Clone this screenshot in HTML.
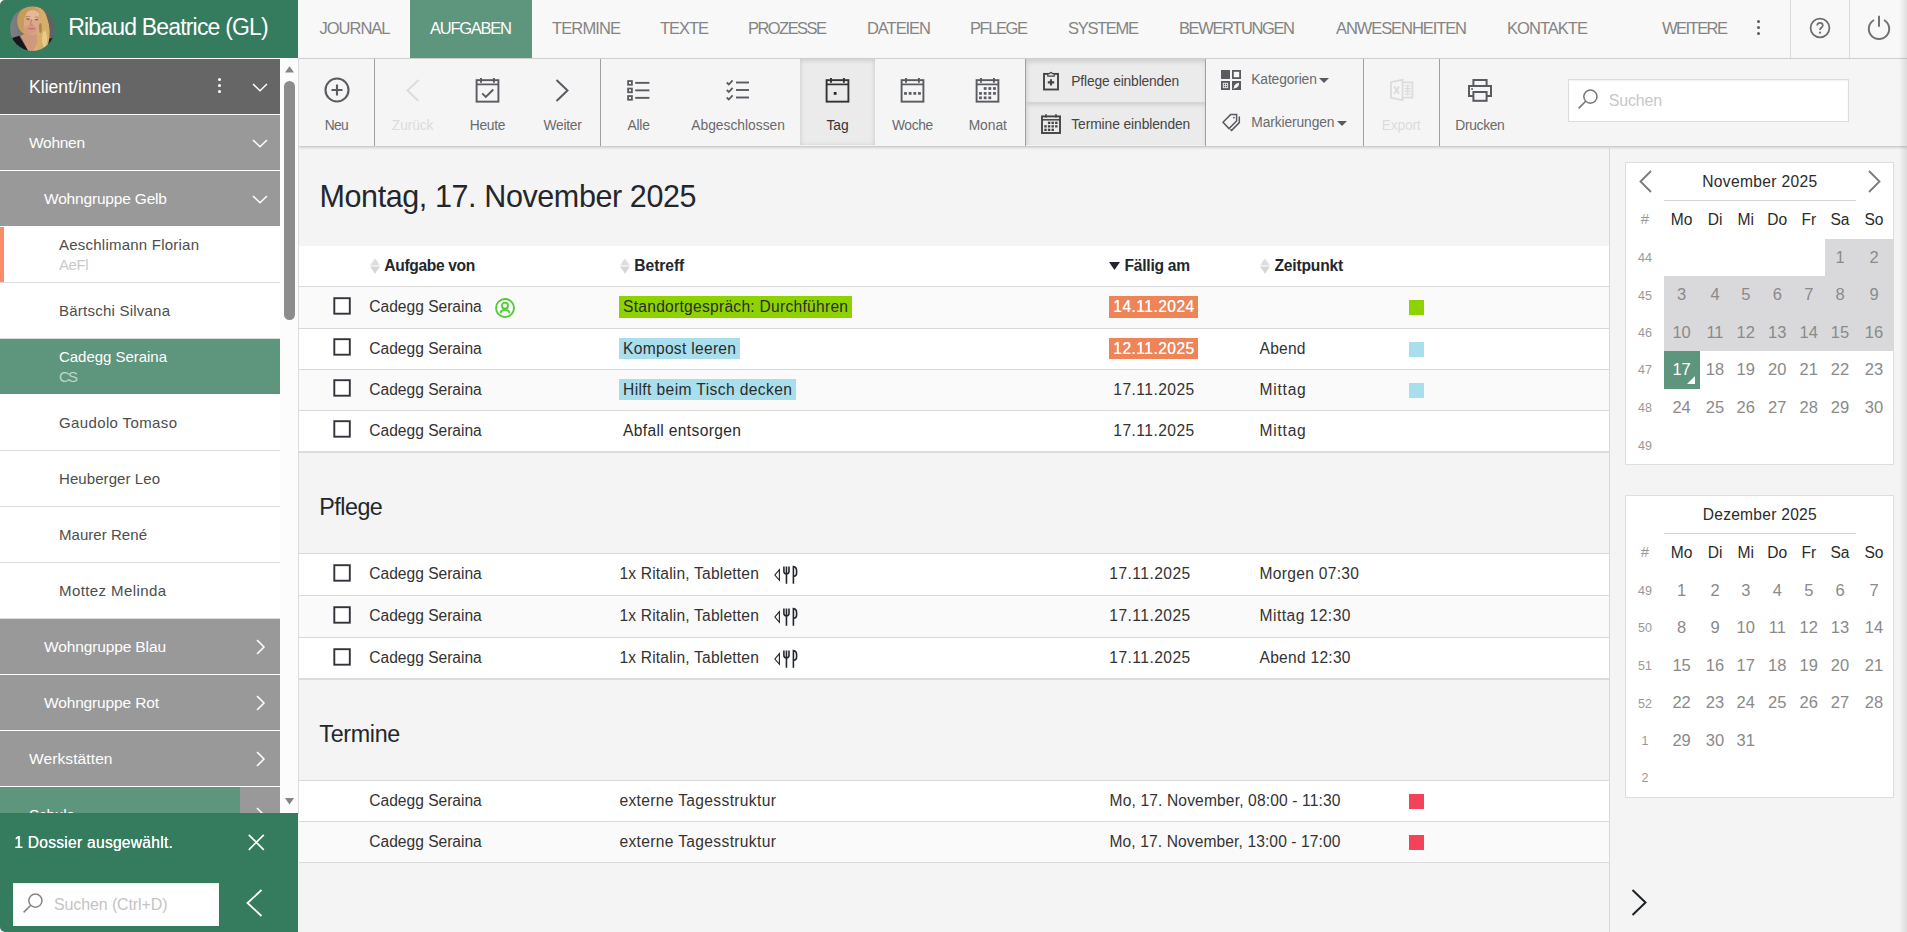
<!DOCTYPE html>
<html><head><meta charset="utf-8"><title>Aufgaben</title>
<style>
html,body{margin:0;padding:0;}
body{width:1907px;height:932px;overflow:hidden;position:relative;background:#f4f4f4;font-family:"Liberation Sans", sans-serif;}
body>div,body>span,body>svg{position:absolute;}
body>span{white-space:pre;line-height:1;}
body>svg{overflow:visible;}
</style></head><body>
<div style="left:0px;top:0px;width:1907px;height:932px;background:#f4f4f4;"></div>
<div style="left:298px;top:0px;width:1609px;height:58px;background:#f8f8f8;"></div>
<div style="left:298px;top:58px;width:1609px;height:1px;background:#d9d9d9;"></div>
<div style="left:298px;top:59px;width:1609px;height:87px;background:#f5f5f5;box-shadow:0 1px 3px rgba(0,0,0,.25);"></div>
<div style="left:0px;top:0px;width:298px;height:58px;background:#357b5e;"></div>
<div style="left:0px;top:58px;width:298px;height:1px;background:#fff;"></div>
<svg style="left:10px;top:6px" width="45" height="45" viewBox="0 0 45 45">
<defs><clipPath id="av"><circle cx="22.4" cy="22.6" r="22.3"/></clipPath>
<linearGradient id="avbg" x1="0" x2="1" y1="0" y2="0"><stop offset="0" stop-color="#7f8084"/><stop offset=".5" stop-color="#6c6d71"/><stop offset="1" stop-color="#5e5f63"/></linearGradient>
<filter id="avb" x="-10%" y="-10%" width="120%" height="120%"><feGaussianBlur stdDeviation=".55"/></filter>
<linearGradient id="avh" x1="0" x2="1" y1="0" y2="1"><stop offset="0" stop-color="#b98f4a"/><stop offset=".5" stop-color="#d3ac64"/><stop offset="1" stop-color="#e1c07c"/></linearGradient>
</defs>
<g clip-path="url(#av)">
<rect width="45" height="45" fill="url(#avbg)"/>
<g filter="url(#avb)">
<path d="M7.4 15 C6.5 6 14 0 24 0.3 C32 0.8 35.5 6 36.8 12 C38.8 18 40 24 39.3 30 C39.6 37 36 43 30 46 L21 46 L24 30 L14 27.5 C9 25 7.4 20 7.4 15 Z" fill="url(#avh)"/>
<path d="M0.5 32.5 L9.2 29.8 L19 46 L2 46 Z" fill="#17171a"/>
<path d="M36.8 33 L43 32 L43 40 L36 42 Z" fill="#1a1a1c"/>
<path d="M10.5 30 L16 27 L27 27 L27.5 36 L23.5 46 L18.8 46 Z" fill="#cf9a7c"/>
<ellipse cx="22.2" cy="16.4" rx="8.7" ry="12.6" fill="#dca787"/>
<ellipse cx="22.6" cy="9" rx="6.6" ry="4.6" fill="#e6b898"/>
<ellipse cx="20.6" cy="23.5" rx="6" ry="4.4" fill="#d69a7e"/>
<path d="M23 1.2 C15.5 3 13 11 14 19 C13.4 22.6 12.4 24.6 13.6 26.6 C8.4 24.6 6.4 17 8 10.4 C10 4 16 0.4 23 1.2 Z" fill="#c69d56"/>
<path d="M23 1 C29 2 31.4 7.4 31 13 C31.8 18 31 23.4 29.6 27.6 C28.4 33 27.4 39 26 46 L33 46 C38 41 39.6 35 39.2 29 C40 22 38.4 16 36.6 11 C35 4.6 30 0.6 23 1 Z" fill="#d5ae68"/>
<ellipse cx="34.6" cy="33" rx="2.6" ry="8.6" fill="#ecd194" opacity=".8"/>
<ellipse cx="30.4" cy="22" rx="1.4" ry="5" fill="#9c743c" opacity=".7"/>
<rect x="16.4" y="12.4" width="3.4" height="1.3" rx=".6" fill="#5d6468"/>
<rect x="25" y="12.9" width="3.2" height="1.3" rx=".6" fill="#5d6468"/>
<path d="M15.6 10.8 Q18 9.8 20.4 10.8 M24.6 11.2 Q26.8 10.4 28.8 11.6" stroke="#a27a52" stroke-width=".7" fill="none"/>
<path d="M21.6 13.5 C21 16 20.4 17.8 20.6 18.8 C21.2 19.6 22.6 19.6 23.4 19" stroke="#b47c60" stroke-width="1" fill="none"/>
<path d="M18.4 22.3 Q21.6 23.6 25 22.2" stroke="#bd6a68" stroke-width="1.2" fill="none"/>
</g>
</g></svg>
<span style="left:68.20px;top:16px;font-size:23px;color:#fff;letter-spacing:-0.818px;">Ribaud Beatrice (GL)</span>
<div style="left:410px;top:0px;width:122px;height:58px;background:#5e957d;"></div>
<span style="left:319.50px;top:20px;font-size:16.5px;color:#848484;letter-spacing:-1.003px;">JOURNAL</span>
<span style="left:430.00px;top:20px;font-size:16.5px;color:#fff;letter-spacing:-1.254px;">AUFGABEN</span>
<span style="left:552.00px;top:20px;font-size:16.5px;color:#848484;letter-spacing:-0.875px;">TERMINE</span>
<span style="left:660.00px;top:20px;font-size:16.5px;color:#848484;letter-spacing:-1.047px;">TEXTE</span>
<span style="left:748.00px;top:20px;font-size:16.5px;color:#848484;letter-spacing:-1.551px;">PROZESSE</span>
<span style="left:867.00px;top:20px;font-size:16.5px;color:#848484;letter-spacing:-1.049px;">DATEIEN</span>
<span style="left:970.00px;top:20px;font-size:16.5px;color:#848484;letter-spacing:-1.422px;">PFLEGE</span>
<span style="left:1068.00px;top:20px;font-size:16.5px;color:#848484;letter-spacing:-1.310px;">SYSTEME</span>
<span style="left:1179.00px;top:20px;font-size:16.5px;color:#848484;letter-spacing:-1.387px;">BEWERTUNGEN</span>
<span style="left:1336.00px;top:20px;font-size:16.5px;color:#848484;letter-spacing:-1.078px;">ANWESENHEITEN</span>
<span style="left:1507.00px;top:20px;font-size:16.5px;color:#848484;letter-spacing:-0.960px;">KONTAKTE</span>
<span style="left:1662.00px;top:20px;font-size:16.5px;color:#848484;letter-spacing:-1.529px;">WEITERE</span>
<div style="left:1756.8px;top:20.299999999999997px;width:3px;height:3px;background:#5c5c5c;border-radius:50%;"></div>
<div style="left:1756.8px;top:26.2px;width:3px;height:3px;background:#5c5c5c;border-radius:50%;"></div>
<div style="left:1756.8px;top:32.1px;width:3px;height:3px;background:#5c5c5c;border-radius:50%;"></div>
<div style="left:1790px;top:0px;width:1px;height:58px;background:#dcdcdc;"></div>
<div style="left:1849px;top:0px;width:1px;height:58px;background:#dcdcdc;"></div>
<svg style="left:1809px;top:16.5px;" width="22" height="22" viewBox="0 0 22 22"><circle cx="11" cy="11" r="9.4" fill="none" stroke="#6e6e6e" stroke-width="1.8"/><path d="M8.2 8.6 C8.2 6.8 9.5 5.9 11 5.9 C12.6 5.9 13.8 6.9 13.8 8.4 C13.8 10.4 11 10.6 11 12.9" fill="none" stroke="#6e6e6e" stroke-width="1.7"/><circle cx="11" cy="15.7" r="1.1" fill="#6e6e6e"/></svg>
<svg style="left:1867.2px;top:15.2px;" width="24" height="24" viewBox="0 0 24 24"><path d="M7 5 A10.2 10.2 0 1 0 17 5" fill="none" stroke="#737373" stroke-width="2"/><path d="M12 0.8 V11.8" stroke="#737373" stroke-width="2"/></svg>
<div style="left:1899px;top:0px;width:8px;height:932px;background:linear-gradient(to right, rgba(0,0,0,0), rgba(0,0,0,.10));"></div>
<div style="left:374px;top:59px;width:1px;height:87px;background:#a0a0a0;"></div>
<div style="left:600px;top:59px;width:1px;height:87px;background:#a0a0a0;"></div>
<div style="left:1025px;top:59px;width:1px;height:87px;background:#a0a0a0;"></div>
<div style="left:1205px;top:59px;width:1px;height:87px;background:#a0a0a0;"></div>
<div style="left:1363px;top:59px;width:1px;height:87px;background:#a0a0a0;"></div>
<div style="left:1439px;top:59px;width:1px;height:87px;background:#a0a0a0;"></div>
<div style="left:800px;top:59px;width:75px;height:86px;background:#ebebeb;box-shadow:inset 0 1px 5px rgba(0,0,0,.16);"></div>
<div style="left:1026px;top:59px;width:179px;height:43px;background:#ebebeb;box-shadow:inset 1px 3px 4px rgba(0,0,0,.12);"></div>
<div style="left:1026px;top:102px;width:179px;height:43px;background:#ebebeb;box-shadow:inset 1px 3px 4px rgba(0,0,0,.12);"></div>
<svg style="left:323.5px;top:77.3px;" width="26" height="26" viewBox="0 0 26 26"><circle cx="13" cy="13" r="11.5" fill="none" stroke="#595b60" stroke-width="2.1"/><path d="M13 7.5 V18.5 M7.5 13 H18.5" stroke="#595b60" stroke-width="2.1"/></svg>
<span style="left:324.70px;top:119px;font-size:13.8px;color:#686a6f;letter-spacing:-0.656px;">Neu</span>
<svg style="left:406px;top:79px;" width="14" height="23" viewBox="0 0 14 23"><path d="M12.5 1 L1.5 11.5 L12.5 22" fill="none" stroke="#dcdcdc" stroke-width="2"/></svg>
<span style="left:391.85px;top:119px;font-size:13.8px;color:#dcdcdc;letter-spacing:-0.134px;">Zurück</span>
<svg style="left:475px;top:78px;" width="25" height="25" viewBox="0 0 25 25"><rect x="1.6" y="2.15" width="21.8" height="21.5" fill="none" stroke="#595b60" stroke-width="1.9"/><path d="M1.6 6.4 H23.4" stroke="#595b60" stroke-width="1.7"/><path d="M6 0 V4.8 M18.9 0 V4.8" stroke="#595b60" stroke-width="1.9"/><path d="M7.2 15.4 L10.8 19 L18.3 11.5" fill="none" stroke="#595b60" stroke-width="1.9"/></svg>
<span style="left:469.75px;top:119px;font-size:13.8px;color:#686a6f;letter-spacing:-0.282px;">Heute</span>
<svg style="left:554.8px;top:79px;" width="14" height="23" viewBox="0 0 14 23"><path d="M1.5 1 L12.5 11.5 L1.5 22" fill="none" stroke="#595b60" stroke-width="2"/></svg>
<span style="left:543.55px;top:119px;font-size:13.8px;color:#686a6f;letter-spacing:-0.265px;">Weiter</span>
<svg style="left:627px;top:79px;" width="24" height="22" viewBox="0 0 24 22"><rect x="1.1" y="2.05" width="3.8" height="3.7" fill="none" stroke="#595b60" stroke-width="1.8"/><path d="M8.2 3.85 H22.4" stroke="#595b60" stroke-width="1.9"/><rect x="1.1" y="9.55" width="3.8" height="3.7" fill="none" stroke="#595b60" stroke-width="1.8"/><path d="M8.2 11.35 H22.4" stroke="#595b60" stroke-width="1.9"/><rect x="1.1" y="17.05" width="3.8" height="3.7" fill="none" stroke="#595b60" stroke-width="1.8"/><path d="M8.2 18.85 H22.4" stroke="#595b60" stroke-width="1.9"/></svg>
<span style="left:627.45px;top:119px;font-size:13.8px;color:#686a6f;letter-spacing:-0.172px;">Alle</span>
<svg style="left:726px;top:79px;" width="24" height="22" viewBox="0 0 24 22"><path d="M0.8 3.5 L2.8 5.5 L6.6 1.2999999999999998" fill="none" stroke="#595b60" stroke-width="1.8"/><path d="M10 3.5 H23" stroke="#595b60" stroke-width="1.9"/><path d="M0.8 11 L2.8 13 L6.6 8.8" fill="none" stroke="#595b60" stroke-width="1.8"/><path d="M10 11 H23" stroke="#595b60" stroke-width="1.9"/><path d="M0.8 18.5 L2.8 20.5 L6.6 16.3" fill="none" stroke="#595b60" stroke-width="1.8"/><path d="M10 18.5 H23" stroke="#595b60" stroke-width="1.9"/></svg>
<span style="left:691.30px;top:119px;font-size:13.8px;color:#686a6f;">Abgeschlossen</span>
<svg style="left:825px;top:78px;" width="25" height="25" viewBox="0 0 25 25"><rect x="1.6" y="2.15" width="21.8" height="21.5" fill="none" stroke="#333" stroke-width="1.9"/><path d="M1.6 6.4 H23.4" stroke="#333" stroke-width="1.7"/><path d="M6 0 V4.8 M18.9 0 V4.8" stroke="#333" stroke-width="1.9"/><rect x="8.75" y="14.05" width="2.8" height="2.7" fill="#222"/></svg>
<span style="left:826.60px;top:119px;font-size:13.8px;color:#333;letter-spacing:-0.125px;">Tag</span>
<svg style="left:900px;top:78px;" width="25" height="25" viewBox="0 0 25 25"><rect x="1.6" y="2.15" width="21.8" height="21.5" fill="none" stroke="#595b60" stroke-width="1.9"/><path d="M1.6 6.4 H23.4" stroke="#595b60" stroke-width="1.7"/><path d="M6 0 V4.8 M18.9 0 V4.8" stroke="#595b60" stroke-width="1.9"/><rect x="4.10" y="14.05" width="2.8" height="2.7" fill="#595b60"/><rect x="8.75" y="14.05" width="2.8" height="2.7" fill="#595b60"/><rect x="13.40" y="14.05" width="2.8" height="2.7" fill="#595b60"/><rect x="18.05" y="14.05" width="2.8" height="2.7" fill="#595b60"/></svg>
<span style="left:891.95px;top:119px;font-size:13.8px;color:#686a6f;letter-spacing:-0.351px;">Woche</span>
<svg style="left:975px;top:78px;" width="25" height="25" viewBox="0 0 25 25"><rect x="1.6" y="2.15" width="21.8" height="21.5" fill="none" stroke="#595b60" stroke-width="1.9"/><path d="M1.6 6.4 H23.4" stroke="#595b60" stroke-width="1.7"/><path d="M6 0 V4.8 M18.9 0 V4.8" stroke="#595b60" stroke-width="1.9"/><rect x="8.75" y="9.15" width="2.8" height="2.7" fill="#595b60"/><rect x="13.40" y="9.15" width="2.8" height="2.7" fill="#595b60"/><rect x="18.05" y="9.15" width="2.8" height="2.7" fill="#595b60"/><rect x="4.10" y="14.05" width="2.8" height="2.7" fill="#595b60"/><rect x="8.75" y="14.05" width="2.8" height="2.7" fill="#595b60"/><rect x="13.40" y="14.05" width="2.8" height="2.7" fill="#595b60"/><rect x="18.05" y="14.05" width="2.8" height="2.7" fill="#595b60"/><rect x="4.10" y="18.45" width="2.8" height="2.7" fill="#595b60"/><rect x="8.75" y="18.45" width="2.8" height="2.7" fill="#595b60"/><rect x="13.40" y="18.45" width="2.8" height="2.7" fill="#595b60"/></svg>
<span style="left:968.65px;top:119px;font-size:13.8px;color:#686a6f;letter-spacing:-0.015px;">Monat</span>
<svg style="left:1043px;top:71.2px;" width="16" height="20" viewBox="0 0 16 20"><rect x="1" y="2.9" width="14" height="15.6" fill="none" stroke="#444" stroke-width="1.9"/><path d="M4.8 5.2 V2.6 H6.6 Q8 0 9.4 2.6 H11.2 V5.2 Z" fill="#ebebeb" stroke="#444" stroke-width="1.2"/><path d="M8 8.2 V14.6 M4.8 11.4 H11.2" stroke="#444" stroke-width="2.1"/></svg>
<span style="left:1071.30px;top:75px;font-size:13.8px;color:#444;letter-spacing:-0.155px;">Pflege einblenden</span>
<svg style="left:1041px;top:114px;" width="20" height="20" viewBox="0 0 20 20"><rect x="1" y="2.4" width="18" height="16.6" fill="none" stroke="#444" stroke-width="1.9"/><path d="M1 5.8 H19" stroke="#444" stroke-width="1.5"/><path d="M5 0.2 V3.4 M15 0.2 V3.4" stroke="#444" stroke-width="1.7"/><rect x="6.9" y="7.7" width="2.4" height="2.3" fill="#444"/><rect x="10.5" y="7.7" width="2.4" height="2.3" fill="#444"/><rect x="14.100000000000001" y="7.7" width="2.4" height="2.3" fill="#444"/><rect x="3.3" y="11.2" width="2.4" height="2.3" fill="#444"/><rect x="6.9" y="11.2" width="2.4" height="2.3" fill="#444"/><rect x="10.5" y="11.2" width="2.4" height="2.3" fill="#444"/><rect x="14.100000000000001" y="11.2" width="2.4" height="2.3" fill="#444"/><rect x="3.3" y="14.7" width="2.4" height="2.3" fill="#444"/><rect x="6.9" y="14.7" width="2.4" height="2.3" fill="#444"/><rect x="10.5" y="14.7" width="2.4" height="2.3" fill="#444"/></svg>
<span style="left:1071.30px;top:118px;font-size:13.8px;color:#444;letter-spacing:-0.084px;">Termine einblenden</span>
<svg style="left:1221px;top:70px;" width="20" height="20" viewBox="0 0 20 20"><rect x="0" y="0" width="9" height="9" fill="#595b60"/><rect x="11.9" y="0.9" width="7.2" height="7.2" fill="none" stroke="#595b60" stroke-width="1.8"/><rect x="0" y="11" width="9" height="9" fill="#595b60"/><rect x="2.3" y="13.3" width="4.4" height="4.4" fill="none" stroke="#f0f0f0" stroke-width=".9"/><path d="M2.3 15.5 H6.7 M4.5 13.3 V17.7" stroke="#f0f0f0" stroke-width=".8"/><rect x="11" y="11" width="9" height="9" fill="#595b60"/><path d="M12.8 18.2 C12.8 15 14.8 12.9 18.1 12.9 C18.1 16.2 16 18.2 12.8 18.2 Z" fill="#f4f4f4"/><path d="M12.4 18.6 L14.2 16.8" stroke="#f4f4f4" stroke-width=".8"/></svg>
<span style="left:1251.30px;top:73px;font-size:13.8px;color:#686a6f;letter-spacing:-0.137px;">Kategorien</span>
<svg style="left:1318.6px;top:77.8px;" width="10" height="5" viewBox="0 0 10 5"><path d="M0 0 H10 L5 5 Z" fill="#595b60"/></svg>
<svg style="left:1222px;top:113px;" width="20" height="19" viewBox="0 0 20 19"><path d="M1 9.2 L8.6 1.6 H14.6 V8 L7 15.6 Z" fill="none" stroke="#595b60" stroke-width="1.5"/><circle cx="11.9" cy="4.6" r=".9" fill="#595b60"/><path d="M17.3 3.6 V9.6 L9.6 17.4 L8.4 16.4" fill="none" stroke="#595b60" stroke-width="1.5"/></svg>
<span style="left:1251.30px;top:116px;font-size:13.8px;color:#686a6f;letter-spacing:-0.105px;">Markierungen</span>
<svg style="left:1337px;top:121px;" width="10" height="5" viewBox="0 0 10 5"><path d="M0 0 H10 L5 5 Z" fill="#595b60"/></svg>
<svg style="left:1390px;top:79px;" width="24" height="22" viewBox="0 0 24 22"><path d="M1 3.2 L12.5 0.8 V21.2 L1 18.8 Z" fill="none" stroke="#dcdcdc" stroke-width="1.8"/><path d="M12.5 3.4 H22.4 V18.6 H12.5" fill="none" stroke="#dcdcdc" stroke-width="1.8"/><path d="M4.2 7.4 L9 14.8 M9 7.4 L4.2 14.8" stroke="#dcdcdc" stroke-width="1.9"/><path d="M14.5 6.8 H20.6 M14.5 9.6 H20.6 M14.5 12.4 H20.6 M14.5 15.2 H20.6 M17.6 5.4 V16.6" stroke="#dcdcdc" stroke-width="1.3"/></svg>
<span style="left:1381.70px;top:119px;font-size:13.8px;color:#dcdcdc;letter-spacing:-0.175px;">Export</span>
<svg style="left:1468.2px;top:79px;" width="24" height="23" viewBox="0 0 24 23"><rect x="5.4" y="1" width="13.2" height="6" fill="none" stroke="#595b60" stroke-width="2"/><path d="M5.4 17 H1 V7 H23 V17 H18.6" fill="none" stroke="#595b60" stroke-width="2"/><rect x="5.4" y="13" width="13.2" height="8.8" fill="none" stroke="#595b60" stroke-width="2"/><rect x="3.2" y="9.2" width="1.8" height="1.6" fill="#595b60"/></svg>
<span style="left:1455.25px;top:119px;font-size:13.8px;color:#686a6f;letter-spacing:-0.312px;">Drucken</span>
<div style="left:1568px;top:79px;width:280.5px;height:42.6px;background:#fff;border:1px solid #ddd;box-sizing:border-box;box-shadow:inset 0 1px 2px rgba(0,0,0,.06);"></div>
<svg style="left:1576.5px;top:88.3px;" width="22.0" height="22.0" viewBox="0 0 22 22"><circle cx="13.4" cy="8.6" r="6.6" fill="none" stroke="#777" stroke-width="1.5"/><path d="M8.7 13.3 L1.6 20.4" stroke="#777" stroke-width="1.6"/></svg>
<span style="left:1608.70px;top:93px;font-size:16px;color:#c8c8c8;letter-spacing:-0.153px;">Suchen</span>
<div style="left:0px;top:59px;width:298px;height:873px;background:#fff;"></div>
<div style="left:0px;top:59px;width:280px;height:55px;background:#666;"></div>
<span style="left:29.00px;top:79px;font-size:17.5px;color:#fff;letter-spacing:0.048px;">Klient/innen</span>
<div style="left:218.3px;top:78.2px;width:3px;height:3px;background:#fff;border-radius:50%;"></div>
<div style="left:218.3px;top:84.2px;width:3px;height:3px;background:#fff;border-radius:50%;"></div>
<div style="left:218.3px;top:90.2px;width:3px;height:3px;background:#fff;border-radius:50%;"></div>
<svg style="left:251.5px;top:82.5px;" width="16" height="9" viewBox="0 0 16 9"><path d="M1 1 L8 7.7 L15 1" fill="none" stroke="#fff" stroke-width="1.5"/></svg>
<div style="left:0px;top:115px;width:280px;height:55px;background:#999;"></div>
<span style="left:29.00px;top:135px;font-size:15.5px;color:#fff;letter-spacing:-0.291px;">Wohnen</span>
<svg style="left:251.5px;top:138.5px;" width="16" height="9" viewBox="0 0 16 9"><path d="M1 1 L8 7.7 L15 1" fill="none" stroke="#fff" stroke-width="1.5"/></svg>
<div style="left:0px;top:171px;width:280px;height:55px;background:#999;"></div>
<span style="left:44.00px;top:191px;font-size:15.5px;color:#fff;letter-spacing:-0.181px;">Wohngruppe Gelb</span>
<svg style="left:251.5px;top:194.5px;" width="16" height="9" viewBox="0 0 16 9"><path d="M1 1 L8 7.7 L15 1" fill="none" stroke="#fff" stroke-width="1.5"/></svg>
<div style="left:0px;top:282px;width:280px;height:1px;background:#dcdcdc;"></div>
<span style="left:59.00px;top:237px;font-size:15px;color:#4d4d4d;letter-spacing:0.227px;">Aeschlimann Florian</span>
<span style="left:59.00px;top:257px;font-size:15px;color:#cacaca;letter-spacing:-0.448px;">AeFl</span>
<div style="left:0px;top:338px;width:280px;height:1px;background:#dcdcdc;"></div>
<span style="left:59.00px;top:303px;font-size:15px;color:#4d4d4d;letter-spacing:0.229px;">Bärtschi Silvana</span>
<div style="left:0px;top:339px;width:280px;height:55px;background:#5e957d;"></div>
<span style="left:59.00px;top:349px;font-size:15px;color:#fff;letter-spacing:-0.032px;">Cadegg Seraina</span>
<span style="left:59.00px;top:369px;font-size:15px;color:#bfd5ca;letter-spacing:-1.844px;">CS</span>
<div style="left:0px;top:450px;width:280px;height:1px;background:#dcdcdc;"></div>
<span style="left:59.00px;top:415px;font-size:15px;color:#4d4d4d;letter-spacing:0.374px;">Gaudolo Tomaso</span>
<div style="left:0px;top:506px;width:280px;height:1px;background:#dcdcdc;"></div>
<span style="left:59.00px;top:471px;font-size:15px;color:#4d4d4d;letter-spacing:0.077px;">Heuberger Leo</span>
<div style="left:0px;top:562px;width:280px;height:1px;background:#dcdcdc;"></div>
<span style="left:59.00px;top:527px;font-size:15px;color:#4d4d4d;letter-spacing:0.045px;">Maurer René</span>
<div style="left:0px;top:618px;width:280px;height:1px;background:#dcdcdc;"></div>
<span style="left:59.00px;top:583px;font-size:15px;color:#4d4d4d;letter-spacing:0.406px;">Mottez Melinda</span>
<div style="left:0px;top:227px;width:4px;height:55px;background:#fb8c69;"></div>
<div style="left:0px;top:619px;width:280px;height:55px;background:#999;"></div>
<span style="left:44.00px;top:639px;font-size:15.5px;color:#fff;letter-spacing:-0.129px;">Wohngruppe Blau</span>
<svg style="left:256.0px;top:638.5px;" width="9" height="16" viewBox="0 0 9 16"><path d="M1 1 L8 8 L1 15" fill="none" stroke="#fff" stroke-width="1.5"/></svg>
<div style="left:0px;top:675px;width:280px;height:55px;background:#999;"></div>
<span style="left:44.00px;top:695px;font-size:15.5px;color:#fff;letter-spacing:-0.147px;">Wohngruppe Rot</span>
<svg style="left:256.0px;top:694.5px;" width="9" height="16" viewBox="0 0 9 16"><path d="M1 1 L8 8 L1 15" fill="none" stroke="#fff" stroke-width="1.5"/></svg>
<div style="left:0px;top:731px;width:280px;height:55px;background:#999;"></div>
<span style="left:29.00px;top:751px;font-size:15.5px;color:#fff;letter-spacing:0.108px;">Werkstätten</span>
<svg style="left:256.0px;top:750.5px;" width="9" height="16" viewBox="0 0 9 16"><path d="M1 1 L8 8 L1 15" fill="none" stroke="#fff" stroke-width="1.5"/></svg>
<div style="left:0px;top:787px;width:240px;height:40px;background:#5e957d;"></div>
<div style="left:240px;top:787px;width:40px;height:40px;background:#999;"></div>
<span style="left:29.00px;top:807px;font-size:15.5px;color:#fff;letter-spacing:-0.281px;">Schule</span>
<svg style="left:256.0px;top:806.5px;" width="9" height="16" viewBox="0 0 9 16"><path d="M1 1 L8 8 L1 15" fill="none" stroke="#fff" stroke-width="1.5"/></svg>
<div style="left:280px;top:59px;width:18px;height:754px;background:#fcfcfc;"></div>
<svg style="left:284.5px;top:65.8px;" width="9" height="7" viewBox="0 0 9 7"><path d="M0 6.6 L4.5 0.3 L9 6.6 Z" fill="#858585"/></svg>
<svg style="left:284.8px;top:798.2px;" width="9" height="7" viewBox="0 0 9 7"><path d="M0 0 L4.5 6.5 L9 0 Z" fill="#858585"/></svg>
<div style="left:284px;top:81px;width:11px;height:239px;background:#8c8c8c;border-radius:6px;"></div>
<div style="left:298px;top:59px;width:1px;height:755px;background:#dcdcde;"></div>
<div style="left:0px;top:813px;width:298px;height:119px;background:#357b5e;"></div>
<span style="left:14.30px;top:835px;font-size:15.6px;color:#fff;letter-spacing:0.254px;text-shadow:0 0 .6px #fff;">1 Dossier ausgewählt.</span>
<svg style="left:247.7px;top:833.8px;" width="16.6" height="16.6" viewBox="0 0 16.6 16.6"><path d="M0.8 0.8 L15.8 15.8 M15.8 0.8 L0.8 15.8" stroke="#fff" stroke-width="1.7"/></svg>
<div style="left:13px;top:883px;width:206px;height:42.6px;background:#fff;box-shadow:inset 0 1px 2px rgba(0,0,0,.1);"></div>
<svg style="left:21.5px;top:892.3px;" width="22.0" height="22.0" viewBox="0 0 22 22"><circle cx="13.4" cy="8.6" r="6.6" fill="none" stroke="#858585" stroke-width="1.5"/><path d="M8.7 13.3 L1.6 20.4" stroke="#858585" stroke-width="1.6"/></svg>
<span style="left:54.00px;top:897px;font-size:16px;color:#c4c4c4;letter-spacing:-0.118px;">Suchen (Ctrl+D)</span>
<svg style="left:246px;top:889px;" width="17" height="28" viewBox="0 0 17 28"><path d="M15.5 1 L1.5 14 L15.5 27" fill="none" stroke="#fff" stroke-width="1.8"/></svg>
<div style="left:1609px;top:146px;width:1px;height:786px;background:#d8d8d8;"></div>
<span style="left:319.50px;top:181px;font-size:30.5px;color:#23272d;letter-spacing:-0.399px;">Montag, 17. November 2025</span>
<div style="left:299px;top:246px;width:1310px;height:40px;background:#fff;"></div>
<div style="left:299px;top:286px;width:1310px;height:1.4px;background:#d9d9d9;"></div>
<svg style="left:369.5px;top:257.7px;" width="10" height="16" viewBox="0 0 10 16"><path d="M0 7.6 L5 0.2 L10 7.6 Z" fill="#dedede"/><path d="M0 8.4 L5 15.8 L10 8.4 Z" fill="#d6d6d6"/></svg>
<span style="left:384.30px;top:258px;font-size:15.6px;color:#23272d;font-weight:700;letter-spacing:-0.344px;">Aufgabe von</span>
<svg style="left:619.5px;top:257.7px;" width="10" height="16" viewBox="0 0 10 16"><path d="M0 7.6 L5 0.2 L10 7.6 Z" fill="#dedede"/><path d="M0 8.4 L5 15.8 L10 8.4 Z" fill="#d6d6d6"/></svg>
<span style="left:634.30px;top:258px;font-size:15.6px;color:#23272d;font-weight:700;letter-spacing:-0.044px;">Betreff</span>
<svg style="left:1109px;top:262.3px;" width="11" height="8" viewBox="0 0 11 8"><path d="M0 0 H11 L5.5 8 Z" fill="#23272d"/></svg>
<span style="left:1124.60px;top:258px;font-size:15.6px;color:#23272d;font-weight:700;letter-spacing:-0.262px;">Fällig am</span>
<svg style="left:1259.5px;top:257.7px;" width="10" height="16" viewBox="0 0 10 16"><path d="M0 7.6 L5 0.2 L10 7.6 Z" fill="#dedede"/><path d="M0 8.4 L5 15.8 L10 8.4 Z" fill="#d6d6d6"/></svg>
<span style="left:1274.50px;top:258px;font-size:15.6px;color:#23272d;font-weight:700;letter-spacing:-0.184px;">Zeitpunkt</span>
<div style="left:299px;top:287.4px;width:1310px;height:40.6px;background:#fafafa;"></div>
<div style="left:299px;top:328px;width:1310px;height:1px;background:#d9d9d9;"></div>
<svg style="left:333px;top:297px;" width="18" height="18" viewBox="0 0 18 18"><rect x="1.3" y="1.2" width="15.5" height="15.5" fill="#fff" stroke="#33333c" stroke-width="1.9"/></svg>
<span style="left:369.30px;top:299px;font-size:15.6px;color:#333;letter-spacing:-0.017px;">Cadegg Seraina</span>
<div style="left:619px;top:296px;width:233px;height:22px;background:#8ed300;"></div>
<span style="left:623.00px;top:299px;font-size:15.6px;color:#2b2b2b;letter-spacing:0.265px;">Standortgespräch: Durchführen</span>
<div style="left:1109px;top:296px;width:89px;height:22px;background:#ee8457;"></div>
<span style="left:1113.30px;top:299px;font-size:15.6px;color:#fff;letter-spacing:0.457px;text-shadow:0 0 .5px #fff;">14.11.2024</span>
<div style="left:1409px;top:300px;width:15.4px;height:15px;background:#8ed300;"></div>
<div style="left:299px;top:329px;width:1310px;height:40px;background:#fff;"></div>
<div style="left:299px;top:369px;width:1310px;height:1px;background:#d9d9d9;"></div>
<svg style="left:333px;top:338px;" width="18" height="18" viewBox="0 0 18 18"><rect x="1.3" y="1.2" width="15.5" height="15.5" fill="#fff" stroke="#33333c" stroke-width="1.9"/></svg>
<span style="left:369.30px;top:341px;font-size:15.6px;color:#333;letter-spacing:-0.017px;">Cadegg Seraina</span>
<div style="left:619px;top:338px;width:121px;height:21px;background:#a9dfec;"></div>
<span style="left:623.00px;top:341px;font-size:15.6px;color:#2b2b2b;letter-spacing:0.291px;">Kompost leeren</span>
<div style="left:1109px;top:338px;width:89px;height:21px;background:#ee8457;"></div>
<span style="left:1113.30px;top:341px;font-size:15.6px;color:#fff;letter-spacing:0.457px;text-shadow:0 0 .5px #fff;">12.11.2025</span>
<span style="left:1259.50px;top:341px;font-size:15.6px;color:#333;letter-spacing:0.227px;">Abend</span>
<div style="left:1409px;top:342px;width:15.4px;height:15px;background:#a9dfec;"></div>
<div style="left:299px;top:370px;width:1310px;height:40px;background:#fafafa;"></div>
<div style="left:299px;top:410px;width:1310px;height:1px;background:#d9d9d9;"></div>
<svg style="left:333px;top:379px;" width="18" height="18" viewBox="0 0 18 18"><rect x="1.3" y="1.2" width="15.5" height="15.5" fill="#fff" stroke="#33333c" stroke-width="1.9"/></svg>
<span style="left:369.30px;top:382px;font-size:15.6px;color:#333;letter-spacing:-0.017px;">Cadegg Seraina</span>
<div style="left:619px;top:379px;width:177px;height:21px;background:#a9dfec;"></div>
<span style="left:623.00px;top:382px;font-size:15.6px;color:#2b2b2b;letter-spacing:0.393px;">Hilft beim Tisch decken</span>
<span style="left:1113.30px;top:382px;font-size:15.6px;color:#333;letter-spacing:0.457px;">17.11.2025</span>
<span style="left:1259.50px;top:382px;font-size:15.6px;color:#333;letter-spacing:0.766px;">Mittag</span>
<div style="left:1409px;top:383px;width:15.4px;height:15px;background:#a9dfec;"></div>
<div style="left:299px;top:411px;width:1310px;height:40px;background:#fff;"></div>
<div style="left:299px;top:451px;width:1310px;height:1px;background:#d9d9d9;"></div>
<svg style="left:333px;top:420px;" width="18" height="18" viewBox="0 0 18 18"><rect x="1.3" y="1.2" width="15.5" height="15.5" fill="#fff" stroke="#33333c" stroke-width="1.9"/></svg>
<span style="left:369.30px;top:423px;font-size:15.6px;color:#333;letter-spacing:-0.017px;">Cadegg Seraina</span>
<span style="left:623.00px;top:423px;font-size:15.6px;color:#2b2b2b;letter-spacing:0.353px;">Abfall entsorgen</span>
<span style="left:1113.30px;top:423px;font-size:15.6px;color:#333;letter-spacing:0.457px;">17.11.2025</span>
<span style="left:1259.50px;top:423px;font-size:15.6px;color:#333;letter-spacing:0.766px;">Mittag</span>
<div style="left:299px;top:451px;width:1310px;height:2px;background:#dcdcdc;"></div>
<svg style="left:495px;top:298px;" width="20" height="20" viewBox="0 0 20 20"><circle cx="10" cy="10" r="9" fill="none" stroke="#50cb32" stroke-width="1.8"/><circle cx="10" cy="7.7" r="3" fill="none" stroke="#50cb32" stroke-width="1.8"/><path d="M5.4 15.4 C5.6 12.6 7.6 11.9 10 11.9 C12.4 11.9 14.4 12.6 14.6 15.4" fill="none" stroke="#50cb32" stroke-width="1.8"/></svg>
<span style="left:319.30px;top:496px;font-size:23.3px;color:#23272d;letter-spacing:-0.512px;">Pflege</span>
<div style="left:299px;top:553px;width:1310px;height:1px;background:#d9d9d9;"></div>
<div style="left:299px;top:554px;width:1310px;height:41px;background:#fff;"></div>
<div style="left:299px;top:595px;width:1310px;height:1px;background:#d9d9d9;"></div>
<svg style="left:333px;top:564px;" width="18" height="18" viewBox="0 0 18 18"><rect x="1.3" y="1.2" width="15.5" height="15.5" fill="#fff" stroke="#33333c" stroke-width="1.9"/></svg>
<span style="left:369.30px;top:566px;font-size:15.6px;color:#333;letter-spacing:-0.017px;">Cadegg Seraina</span>
<span style="left:619.40px;top:566px;font-size:15.6px;color:#333;letter-spacing:0.184px;">1x Ritalin, Tabletten</span>
<svg style="left:774px;top:566px;" width="24" height="19" viewBox="0 0 24 19"><path d="M5.4 3.7 L0.9 9 L5.4 14.3 Z" fill="none" stroke="#23272d" stroke-width="1.15"/><path d="M9.9 0.4 V5.4 Q9.9 7.7 12.45 7.7 Q15 7.7 15 5.4 V0.4 M12.45 0.4 V17.7" fill="none" stroke="#23272d" stroke-width="1.6"/><path d="M19.4 17.7 V0.6 C21.8 0.8 22.6 3 22.6 5 V7.2 C22.6 9.4 21.4 10.2 19.4 10.5" fill="none" stroke="#23272d" stroke-width="1.6"/></svg>
<span style="left:1109.30px;top:566px;font-size:15.6px;color:#333;letter-spacing:0.457px;">17.11.2025</span>
<span style="left:1259.50px;top:566px;font-size:15.6px;color:#333;letter-spacing:0.297px;">Morgen 07:30</span>
<div style="left:299px;top:596px;width:1310px;height:41px;background:#fafafa;"></div>
<div style="left:299px;top:637px;width:1310px;height:1px;background:#d9d9d9;"></div>
<svg style="left:333px;top:605.5px;" width="18" height="18" viewBox="0 0 18 18"><rect x="1.3" y="1.2" width="15.5" height="15.5" fill="#fff" stroke="#33333c" stroke-width="1.9"/></svg>
<span style="left:369.30px;top:608px;font-size:15.6px;color:#333;letter-spacing:-0.017px;">Cadegg Seraina</span>
<span style="left:619.40px;top:608px;font-size:15.6px;color:#333;letter-spacing:0.184px;">1x Ritalin, Tabletten</span>
<svg style="left:774px;top:608px;" width="24" height="19" viewBox="0 0 24 19"><path d="M5.4 3.7 L0.9 9 L5.4 14.3 Z" fill="none" stroke="#23272d" stroke-width="1.15"/><path d="M9.9 0.4 V5.4 Q9.9 7.7 12.45 7.7 Q15 7.7 15 5.4 V0.4 M12.45 0.4 V17.7" fill="none" stroke="#23272d" stroke-width="1.6"/><path d="M19.4 17.7 V0.6 C21.8 0.8 22.6 3 22.6 5 V7.2 C22.6 9.4 21.4 10.2 19.4 10.5" fill="none" stroke="#23272d" stroke-width="1.6"/></svg>
<span style="left:1109.30px;top:608px;font-size:15.6px;color:#333;letter-spacing:0.457px;">17.11.2025</span>
<span style="left:1259.50px;top:608px;font-size:15.6px;color:#333;letter-spacing:0.470px;">Mittag 12:30</span>
<div style="left:299px;top:638px;width:1310px;height:40px;background:#fff;"></div>
<div style="left:299px;top:678px;width:1310px;height:1px;background:#d9d9d9;"></div>
<svg style="left:333px;top:647.5px;" width="18" height="18" viewBox="0 0 18 18"><rect x="1.3" y="1.2" width="15.5" height="15.5" fill="#fff" stroke="#33333c" stroke-width="1.9"/></svg>
<span style="left:369.30px;top:650px;font-size:15.6px;color:#333;letter-spacing:-0.017px;">Cadegg Seraina</span>
<span style="left:619.40px;top:650px;font-size:15.6px;color:#333;letter-spacing:0.184px;">1x Ritalin, Tabletten</span>
<svg style="left:774px;top:650px;" width="24" height="19" viewBox="0 0 24 19"><path d="M5.4 3.7 L0.9 9 L5.4 14.3 Z" fill="none" stroke="#23272d" stroke-width="1.15"/><path d="M9.9 0.4 V5.4 Q9.9 7.7 12.45 7.7 Q15 7.7 15 5.4 V0.4 M12.45 0.4 V17.7" fill="none" stroke="#23272d" stroke-width="1.6"/><path d="M19.4 17.7 V0.6 C21.8 0.8 22.6 3 22.6 5 V7.2 C22.6 9.4 21.4 10.2 19.4 10.5" fill="none" stroke="#23272d" stroke-width="1.6"/></svg>
<span style="left:1109.30px;top:650px;font-size:15.6px;color:#333;letter-spacing:0.457px;">17.11.2025</span>
<span style="left:1259.50px;top:650px;font-size:15.6px;color:#333;letter-spacing:0.255px;">Abend 12:30</span>
<div style="left:299px;top:678px;width:1310px;height:2px;background:#dcdcdc;"></div>
<span style="left:319.30px;top:723px;font-size:23.3px;color:#23272d;letter-spacing:-0.310px;">Termine</span>
<div style="left:299px;top:780px;width:1310px;height:1px;background:#d9d9d9;"></div>
<div style="left:299px;top:781px;width:1310px;height:40px;background:#fff;"></div>
<div style="left:299px;top:821px;width:1310px;height:1px;background:#d9d9d9;"></div>
<span style="left:369.30px;top:793px;font-size:15.6px;color:#333;letter-spacing:-0.017px;">Cadegg Seraina</span>
<span style="left:619.40px;top:793px;font-size:15.6px;color:#333;letter-spacing:0.341px;">externe Tagesstruktur</span>
<span style="left:1109.50px;top:793px;font-size:15.6px;color:#333;letter-spacing:0.139px;">Mo, 17. November, 08:00 - 11:30</span>
<div style="left:1409px;top:794px;width:15px;height:15px;background:#f4425a;"></div>
<div style="left:299px;top:822px;width:1310px;height:40px;background:#fafafa;"></div>
<div style="left:299px;top:862px;width:1310px;height:1px;background:#d9d9d9;"></div>
<span style="left:369.30px;top:834px;font-size:15.6px;color:#333;letter-spacing:-0.017px;">Cadegg Seraina</span>
<span style="left:619.40px;top:834px;font-size:15.6px;color:#333;letter-spacing:0.341px;">externe Tagesstruktur</span>
<span style="left:1109.50px;top:834px;font-size:15.6px;color:#333;letter-spacing:0.101px;">Mo, 17. November, 13:00 - 17:00</span>
<div style="left:1409px;top:835px;width:15px;height:15px;background:#f4425a;"></div>
<div style="left:1625px;top:162px;width:269px;height:303px;background:#fff;border:1px solid #dedede;box-sizing:border-box;"></div>
<span style="left:1702.20px;top:174px;font-size:15.6px;color:#2b2b2b;letter-spacing:0.336px;">November 2025</span>
<div style="left:1664px;top:200px;width:192px;height:1px;background:#d4d4d4;"></div>
<svg style="left:1639px;top:170px;" width="13" height="23" viewBox="0 0 13 23"><path d="M12 1 L1.5 11.5 L12 22" fill="none" stroke="#7a7a7a" stroke-width="1.8"/></svg>
<svg style="left:1868px;top:170px;" width="13" height="23" viewBox="0 0 13 23"><path d="M1 1 L11.5 11.5 L1 22" fill="none" stroke="#7a7a7a" stroke-width="1.8"/></svg>
<span style="left:1640.83px;top:211px;font-size:15px;color:#999;">#</span>
<span style="left:1670.76px;top:212px;font-size:15.6px;color:#2b2b2b;">Mo</span>
<span style="left:1707.63px;top:212px;font-size:15.6px;color:#2b2b2b;">Di</span>
<span style="left:1737.57px;top:212px;font-size:15.6px;color:#2b2b2b;">Mi</span>
<span style="left:1767.33px;top:212px;font-size:15.6px;color:#2b2b2b;">Do</span>
<span style="left:1801.44px;top:212px;font-size:15.6px;color:#2b2b2b;">Fr</span>
<span style="left:1830.46px;top:212px;font-size:15.6px;color:#2b2b2b;">Sa</span>
<span style="left:1864.46px;top:212px;font-size:15.6px;color:#2b2b2b;">So</span>
<div style="left:1825px;top:239.0px;width:31px;height:37.0px;background:#d9d9db;"></div>
<div style="left:1856px;top:239.0px;width:38px;height:37.0px;background:#d9d9db;"></div>
<div style="left:1664px;top:275.5px;width:36px;height:38.0px;background:#d9d9db;"></div>
<div style="left:1700px;top:275.5px;width:30px;height:38.0px;background:#d9d9db;"></div>
<div style="left:1730px;top:275.5px;width:31.5px;height:38.0px;background:#d9d9db;"></div>
<div style="left:1761.5px;top:275.5px;width:31.5px;height:38.0px;background:#d9d9db;"></div>
<div style="left:1793px;top:275.5px;width:32px;height:38.0px;background:#d9d9db;"></div>
<div style="left:1825px;top:275.5px;width:31px;height:38.0px;background:#d9d9db;"></div>
<div style="left:1856px;top:275.5px;width:38px;height:38.0px;background:#d9d9db;"></div>
<div style="left:1664px;top:313.0px;width:36px;height:38.0px;background:#d9d9db;"></div>
<div style="left:1700px;top:313.0px;width:30px;height:38.0px;background:#d9d9db;"></div>
<div style="left:1730px;top:313.0px;width:31.5px;height:38.0px;background:#d9d9db;"></div>
<div style="left:1761.5px;top:313.0px;width:31.5px;height:38.0px;background:#d9d9db;"></div>
<div style="left:1793px;top:313.0px;width:32px;height:38.0px;background:#d9d9db;"></div>
<div style="left:1825px;top:313.0px;width:31px;height:38.0px;background:#d9d9db;"></div>
<div style="left:1856px;top:313.0px;width:38px;height:38.0px;background:#d9d9db;"></div>
<span style="left:1638.05px;top:252px;font-size:12.5px;color:#999;">44</span>
<span style="left:1638.05px;top:290px;font-size:12.5px;color:#999;">45</span>
<span style="left:1638.05px;top:327px;font-size:12.5px;color:#999;">46</span>
<span style="left:1638.05px;top:364px;font-size:12.5px;color:#999;">47</span>
<span style="left:1638.05px;top:402px;font-size:12.5px;color:#999;">48</span>
<span style="left:1638.05px;top:440px;font-size:12.5px;color:#999;">49</span>
<span style="left:1835.41px;top:249px;font-size:16.5px;color:#8a8a8a;">1</span>
<span style="left:1869.41px;top:249px;font-size:16.5px;color:#8a8a8a;">2</span>
<span style="left:1677.01px;top:286px;font-size:16.5px;color:#8a8a8a;">3</span>
<span style="left:1710.41px;top:286px;font-size:16.5px;color:#8a8a8a;">4</span>
<span style="left:1741.21px;top:286px;font-size:16.5px;color:#8a8a8a;">5</span>
<span style="left:1772.71px;top:286px;font-size:16.5px;color:#8a8a8a;">6</span>
<span style="left:1804.21px;top:286px;font-size:16.5px;color:#8a8a8a;">7</span>
<span style="left:1835.41px;top:286px;font-size:16.5px;color:#8a8a8a;">8</span>
<span style="left:1869.41px;top:286px;font-size:16.5px;color:#8a8a8a;">9</span>
<span style="left:1672.42px;top:324px;font-size:16.5px;color:#8a8a8a;">10</span>
<span style="left:1706.43px;top:324px;font-size:16.5px;color:#8a8a8a;">11</span>
<span style="left:1736.62px;top:324px;font-size:16.5px;color:#8a8a8a;">12</span>
<span style="left:1768.12px;top:324px;font-size:16.5px;color:#8a8a8a;">13</span>
<span style="left:1799.62px;top:324px;font-size:16.5px;color:#8a8a8a;">14</span>
<span style="left:1830.82px;top:324px;font-size:16.5px;color:#8a8a8a;">15</span>
<span style="left:1864.82px;top:324px;font-size:16.5px;color:#8a8a8a;">16</span>
<div style="left:1664px;top:350.5px;width:36px;height:38.0px;background:#5e957d;"></div>
<span style="left:1672.42px;top:361px;font-size:16.5px;color:#fff;">17</span>
<svg style="left:1687px;top:375.5px;" width="8" height="8" viewBox="0 0 8 8"><path d="M8 0 V8 H0 Z" fill="#fff"/></svg>
<span style="left:1705.82px;top:361px;font-size:16.5px;color:#8a8a8a;">18</span>
<span style="left:1736.62px;top:361px;font-size:16.5px;color:#8a8a8a;">19</span>
<span style="left:1768.12px;top:361px;font-size:16.5px;color:#8a8a8a;">20</span>
<span style="left:1799.62px;top:361px;font-size:16.5px;color:#8a8a8a;">21</span>
<span style="left:1830.82px;top:361px;font-size:16.5px;color:#8a8a8a;">22</span>
<span style="left:1864.82px;top:361px;font-size:16.5px;color:#8a8a8a;">23</span>
<span style="left:1672.42px;top:399px;font-size:16.5px;color:#8a8a8a;">24</span>
<span style="left:1705.82px;top:399px;font-size:16.5px;color:#8a8a8a;">25</span>
<span style="left:1736.62px;top:399px;font-size:16.5px;color:#8a8a8a;">26</span>
<span style="left:1768.12px;top:399px;font-size:16.5px;color:#8a8a8a;">27</span>
<span style="left:1799.62px;top:399px;font-size:16.5px;color:#8a8a8a;">28</span>
<span style="left:1830.82px;top:399px;font-size:16.5px;color:#8a8a8a;">29</span>
<span style="left:1864.82px;top:399px;font-size:16.5px;color:#8a8a8a;">30</span>
<div style="left:1625px;top:495px;width:269px;height:303px;background:#fff;border:1px solid #dedede;box-sizing:border-box;"></div>
<span style="left:1702.70px;top:507px;font-size:15.6px;color:#2b2b2b;letter-spacing:0.253px;">Dezember 2025</span>
<div style="left:1664px;top:533px;width:192px;height:1px;background:#d4d4d4;"></div>
<span style="left:1640.83px;top:544px;font-size:15px;color:#999;">#</span>
<span style="left:1670.76px;top:545px;font-size:15.6px;color:#2b2b2b;">Mo</span>
<span style="left:1707.63px;top:545px;font-size:15.6px;color:#2b2b2b;">Di</span>
<span style="left:1737.57px;top:545px;font-size:15.6px;color:#2b2b2b;">Mi</span>
<span style="left:1767.33px;top:545px;font-size:15.6px;color:#2b2b2b;">Do</span>
<span style="left:1801.44px;top:545px;font-size:15.6px;color:#2b2b2b;">Fr</span>
<span style="left:1830.46px;top:545px;font-size:15.6px;color:#2b2b2b;">Sa</span>
<span style="left:1864.46px;top:545px;font-size:15.6px;color:#2b2b2b;">So</span>
<span style="left:1638.05px;top:585px;font-size:12.5px;color:#999;">49</span>
<span style="left:1638.05px;top:622px;font-size:12.5px;color:#999;">50</span>
<span style="left:1638.05px;top:660px;font-size:12.5px;color:#999;">51</span>
<span style="left:1638.05px;top:698px;font-size:12.5px;color:#999;">52</span>
<span style="left:1641.52px;top:735px;font-size:12.5px;color:#999;">1</span>
<span style="left:1641.52px;top:772px;font-size:12.5px;color:#999;">2</span>
<span style="left:1677.01px;top:582px;font-size:16.5px;color:#8a8a8a;">1</span>
<span style="left:1710.41px;top:582px;font-size:16.5px;color:#8a8a8a;">2</span>
<span style="left:1741.21px;top:582px;font-size:16.5px;color:#8a8a8a;">3</span>
<span style="left:1772.71px;top:582px;font-size:16.5px;color:#8a8a8a;">4</span>
<span style="left:1804.21px;top:582px;font-size:16.5px;color:#8a8a8a;">5</span>
<span style="left:1835.41px;top:582px;font-size:16.5px;color:#8a8a8a;">6</span>
<span style="left:1869.41px;top:582px;font-size:16.5px;color:#8a8a8a;">7</span>
<span style="left:1677.01px;top:619px;font-size:16.5px;color:#8a8a8a;">8</span>
<span style="left:1710.41px;top:619px;font-size:16.5px;color:#8a8a8a;">9</span>
<span style="left:1736.62px;top:619px;font-size:16.5px;color:#8a8a8a;">10</span>
<span style="left:1768.73px;top:619px;font-size:16.5px;color:#8a8a8a;">11</span>
<span style="left:1799.62px;top:619px;font-size:16.5px;color:#8a8a8a;">12</span>
<span style="left:1830.82px;top:619px;font-size:16.5px;color:#8a8a8a;">13</span>
<span style="left:1864.82px;top:619px;font-size:16.5px;color:#8a8a8a;">14</span>
<span style="left:1672.42px;top:657px;font-size:16.5px;color:#8a8a8a;">15</span>
<span style="left:1705.82px;top:657px;font-size:16.5px;color:#8a8a8a;">16</span>
<span style="left:1736.62px;top:657px;font-size:16.5px;color:#8a8a8a;">17</span>
<span style="left:1768.12px;top:657px;font-size:16.5px;color:#8a8a8a;">18</span>
<span style="left:1799.62px;top:657px;font-size:16.5px;color:#8a8a8a;">19</span>
<span style="left:1830.82px;top:657px;font-size:16.5px;color:#8a8a8a;">20</span>
<span style="left:1864.82px;top:657px;font-size:16.5px;color:#8a8a8a;">21</span>
<span style="left:1672.42px;top:694px;font-size:16.5px;color:#8a8a8a;">22</span>
<span style="left:1705.82px;top:694px;font-size:16.5px;color:#8a8a8a;">23</span>
<span style="left:1736.62px;top:694px;font-size:16.5px;color:#8a8a8a;">24</span>
<span style="left:1768.12px;top:694px;font-size:16.5px;color:#8a8a8a;">25</span>
<span style="left:1799.62px;top:694px;font-size:16.5px;color:#8a8a8a;">26</span>
<span style="left:1830.82px;top:694px;font-size:16.5px;color:#8a8a8a;">27</span>
<span style="left:1864.82px;top:694px;font-size:16.5px;color:#8a8a8a;">28</span>
<span style="left:1672.42px;top:732px;font-size:16.5px;color:#8a8a8a;">29</span>
<span style="left:1705.82px;top:732px;font-size:16.5px;color:#8a8a8a;">30</span>
<span style="left:1736.62px;top:732px;font-size:16.5px;color:#8a8a8a;">31</span>
<svg style="left:1631px;top:889px;" width="16" height="27" viewBox="0 0 16 27"><path d="M1.5 1 L14.5 13.5 L1.5 26" fill="none" stroke="#1d2127" stroke-width="2"/></svg>
<svg style="left:0px;top:0px;" width="6" height="6" viewBox="0 0 6 6"><path d="M0 0 H5 A5 5 0 0 0 0 5 Z" fill="#fff"/></svg>
<svg style="left:0px;top:926px;" width="6" height="6" viewBox="0 0 6 6"><path d="M0 6 H5 A5 5 0 0 1 0 1 Z" fill="#fff"/></svg>
</body></html>
